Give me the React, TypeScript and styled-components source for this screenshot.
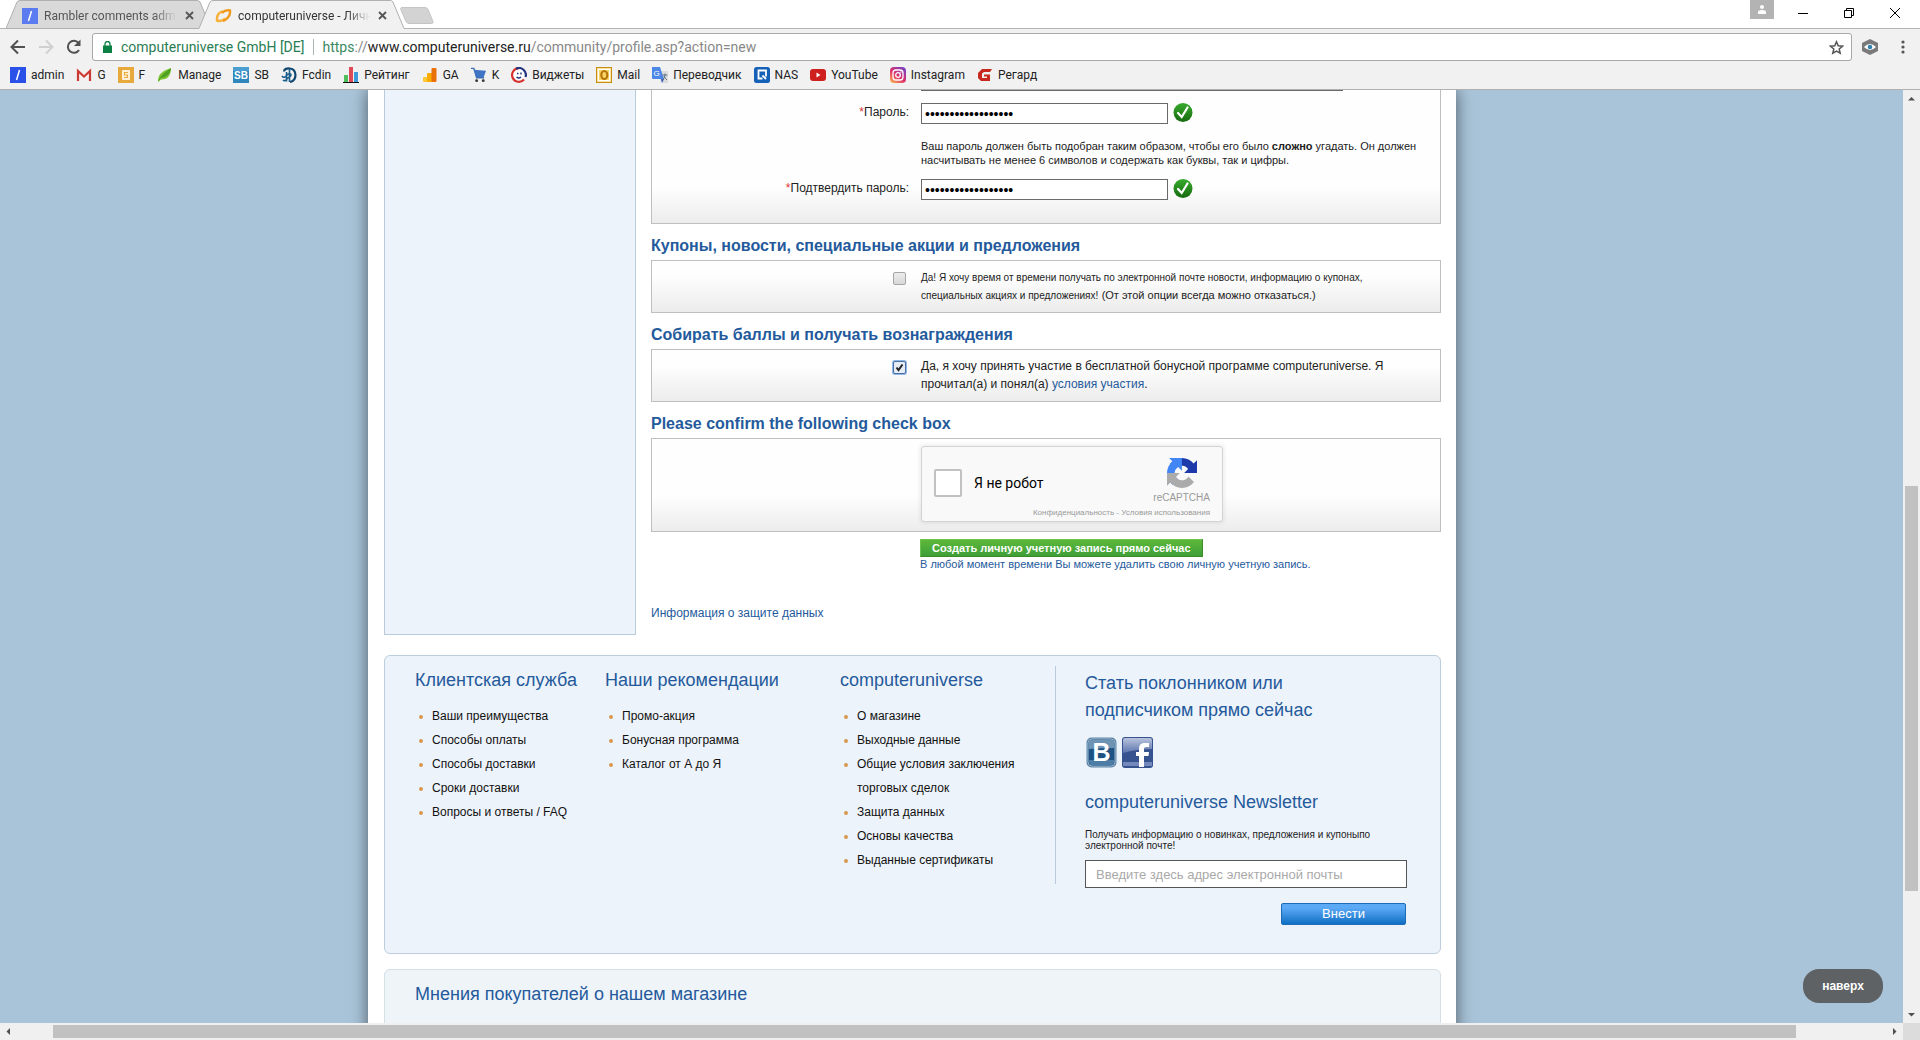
import React from 'react';
import styled, { createGlobalStyle } from 'styled-components';

const GlobalStyle = createGlobalStyle`
  *, *::before, *::after { box-sizing: border-box; }
  body { margin: 0; overflow: hidden; }
  h2, h3, p, ul { margin: 0; padding: 0; font-weight: inherit; }
  button, input { font: inherit; margin: 0; padding: 0; border: 0; border-radius: 0; background: none; }
  a { text-decoration: none; color: inherit; }
`;

const blue = '#245a9c';
const uiFont = `Roboto, "Noto Sans", sans-serif`;
const pageFont = `"Liberation Sans", Arial, sans-serif`;

const Window = styled.div`
  display: flex;
  flex-direction: column;
  height: 100vh;
  background: #fff;
  font-family: ${uiFont};
`;

/* ---------- tab strip ---------- */

const TabStrip = styled.header`
  display: flex;
  align-items: stretch;
  height: 29px;
  padding-left: 6px;
  border-bottom: 1px solid #b4b4b4;
`;

const TabItem = styled.div<{ $active?: boolean }>`
  position: relative;
  z-index: ${p => (p.$active ? 2 : 1)};
  display: flex;
  align-items: center;
  width: 206px;
  height: 29px;
  padding: 2px 18px 0 16px;
  margin-right: -13px;
`;

const TabShape = styled.svg`
  position: absolute;
  inset: 0;
  width: 100%;
  height: 100%;
`;

const TabTitle = styled.span<{ $muted?: boolean }>`
  position: relative;
  flex: 1;
  margin: 0 8px 0 6px;
  overflow: hidden;
  white-space: nowrap;
  font-size: 12px;
  line-height: 16px;
  color: ${p => (p.$muted ? '#555' : '#333')};
  mask-image: linear-gradient(90deg, #000 calc(100% - 24px), transparent);
`;

const IconButton = styled.button`
  position: relative;
  display: flex;
  align-items: center;
  justify-content: center;
  flex: none;
`;

const Icon = styled.svg`
  position: relative;
  display: block;
  flex: none;
`;

const NewTab = styled.button`
  margin: 7px 0 0 8px;
  width: 34px;
  height: 17px;
  display: flex;
`;

const WindowControls = styled.div`
  display: flex;
  align-items: center;
  margin-left: auto;
  height: 26px;
  padding-right: 2px;
`;

const ProfileButton = styled.button`
  align-self: flex-start;
  display: flex;
  align-items: center;
  justify-content: center;
  width: 24px;
  height: 19px;
  margin-right: 6px;
  background: #b3b3b3;
`;

const ControlButton = styled(IconButton)`
  width: 46px;
  height: 26px;
`;

/* ---------- toolbar ---------- */

const Toolbar = styled.div`
  display: flex;
  align-items: center;
  height: 36px;
  padding: 4px 9px 4px 9px;
  background: #f1f1f1;
`;

const NavButtons = styled.div`
  display: flex;
  gap: 10px;
  width: 83px;
`;

const AddressBar = styled.div`
  display: flex;
  align-items: center;
  flex: 1;
  height: 28px;
  padding: 0 7px 0 10px;
  border: 1px solid #a8a8a8;
  border-radius: 3px;
  background: #fff;
  font-size: 14px;
  color: #2a7d52;
`;

const CertName = styled.span`
  margin-left: 9px;
  padding-right: 9px;
  line-height: 16px;
  border-right: 1px solid #a8b8ae;
`;

const Url = styled.span`
  flex: 1;
  margin-left: 8px;
  color: #888;
  b { font-weight: 400; color: #222; }
  i { font-style: normal; color: #3a8a5f; }
`;

const Extras = styled.div`
  display: flex;
  align-items: center;
  gap: 16px;
  margin-left: 9px;
`;

const Bookmarks = styled.nav`
  display: flex;
  align-items: center;
  gap: 12px;
  height: 25px;
  padding: 0 10px 5px;
  background: #f1f1f1;
  border-bottom: 1px solid #b0b0b0;
  font-size: 12px;
  line-height: 16px;
  color: #222;
`;

const Bookmark = styled.a`
  display: flex;
  align-items: center;
  gap: 5px;
  white-space: nowrap;
`;

/* ---------- scroll bars ---------- */

const Body = styled.div`
  display: grid;
  flex: 1;
  min-height: 0;
  grid-template-columns: minmax(0, 1fr) 17px;
  grid-template-rows: minmax(0, 1fr) 17px;
`;

const Track = styled.div<{ $vertical?: boolean }>`
  display: flex;
  flex-direction: ${p => (p.$vertical ? 'column' : 'row')};
  align-items: center;
  background: #f0f0f0;
`;

const TrackButton = styled(IconButton)`
  width: 17px;
  height: 17px;
`;

const Gap = styled.div<{ $grow: number }>`
  flex: ${p => p.$grow} 1 0;
`;

const Thumb = styled.div<{ $grow: number; $vertical?: boolean }>`
  flex: ${p => p.$grow} 1 0;
  background: #c1c1c1;
  ${p => (p.$vertical ? 'width: 13px;' : 'height: 13px;')}
`;

const Corner = styled.div`
  background: #dcdcdc;
`;

/* ---------- page ---------- */

const Viewport = styled.main`
  position: relative;
  display: flex;
  justify-content: center;
  overflow: hidden;
  padding-right: 79px;
  background: #a9c4d9;
  font-family: ${pageFont};
  font-size: 12px;
  color: #222;
`;

const Page = styled.div`
  width: 1088px;
  padding: 0 15px 0 16px;
  background: #fff;
  box-shadow: 0 0 16px rgba(0, 0, 0, 0.55);
  min-height: 100%;
  align-self: flex-start;
`;

const Columns = styled.div`
  display: flex;
  gap: 15px;
`;

const Sidebar = styled.aside`
  width: 252px;
  border: 1px solid #b9cbdb;
  border-top: 0;
  background: #edf3fb;
`;

const Form = styled.form`
  flex: 1;
  padding-bottom: 15px;
`;

const Panel = styled.section<{ $open?: boolean; $pad: string }>`
  padding: ${p => p.$pad};
  border: 1px solid #bfbfbf;
  ${p => p.$open && 'border-top: 0;'}
  background: linear-gradient(0deg, #ececec, #fefefe 36px);
`;

const SectionTitle = styled.h2`
  margin: 12px 0 4px;
  font-size: 16px;
  font-weight: 700;
  line-height: 20px;
  color: ${blue};
`;

const Row = styled.div`
  display: grid;
  grid-template-columns: 257px minmax(0, 1fr);
  column-gap: 12px;
`;

const FieldLabel = styled.label`
  text-align: right;
  line-height: 18px;
  span { color: #d33; }
`;

const Field = styled.div`
  display: flex;
  gap: 5px;
`;

const TextInput = styled.input<{ $wide?: boolean }>`
  flex: none;
  width: ${p => (p.$wide ? '422px' : '247px')};
  height: 21px;
  padding: 0 3px;
  border: 1px solid #6a6a6a;
  background: #fff;
  font-size: 14px;
  color: #000;
`;

const CutField = styled.div`
  display: flex;
  align-items: flex-end;
  height: 1px;
  margin-bottom: 12px;
  overflow: hidden;
`;

const Hint = styled.p`
  grid-column: 2;
  margin: 15px 0 12px;
  padding-right: 20px;
  font-size: 11px;
  line-height: 14px;
`;

const CheckCell = styled.div`
  display: flex;
  justify-content: flex-end;
  padding: 4px 3px 0 0;
`;

const CheckBox = styled.input`
  appearance: none;
  width: 13px;
  height: 13px;
  border: 1px solid #a5a5a5;
  border-radius: 2px;
  background: linear-gradient(#ececec, #d8d8d8);
  &:checked {
    border-color: #4d6f9f;
    box-shadow: 0 0 0 1px #8fb6ea;
    background: #e6ecf5 url("data:image/svg+xml,%3Csvg xmlns='http://www.w3.org/2000/svg' viewBox='0 0 11 11'%3E%3Cpath d='M2.5 5.5l2 2.5L8.500 2.500' fill='none' stroke='%23222' stroke-width='2'/%3E%3C/svg%3E");
  }
`;

const CheckText = styled.label`
  padding-right: 40px;
  line-height: 18px;
`;

const Small = styled.span<{ $size: number }>`
  font-size: ${p => p.$size}px;
  line-height: 12px;
`;

const Link = styled.a`
  color: ${blue};
`;

const Captcha = styled.div`
  display: flex;
  align-items: center;
  width: 302px;
  height: 76px;
  padding: 0 12px 3px;
  border: 1px solid #d3d3d3;
  border-radius: 3px;
  background: #f9f9f9;
  box-shadow: 0 0 4px 1px rgba(0, 0, 0, 0.08);
  font-family: ${uiFont};
`;

const CaptchaBox = styled.input`
  appearance: none;
  flex: none;
  width: 28px;
  height: 28px;
  border: 2px solid #c1c1c1;
  border-radius: 2px;
  background: #fff;
`;

const CaptchaLabel = styled.label`
  margin-left: 12px;
  font-size: 14px;
  color: #000;
  white-space: nowrap;
`;

const CaptchaBrand = styled.div`
  display: flex;
  flex-direction: column;
  align-items: flex-end;
  flex: 1;
  padding-top: 12px;
  font-family: ${pageFont};
  color: #999;
`;

const BrandLogo = styled.div`
  display: flex;
  flex-direction: column;
  align-items: center;
  gap: 4px;
  font-size: 10px;
  line-height: 12px;
`;

const Legal = styled.div`
  margin-top: 3px;
  margin-left: -60px;
  font-size: 8px;
  line-height: 12px;
  white-space: nowrap;
`;

const Submit = styled.button`
  display: block;
  margin: 7px 0 0 269px;
  height: 18px;
  padding: 0 11px;
  border: 1px solid;
  border-color: #6cc04d #3c8a2a #3c8a2a #6cc04d;
  background: linear-gradient(#5cb83a, #3f9f38);
  color: #fff;
  font-size: 11px;
  font-weight: 700;
  line-height: 16px;
  white-space: nowrap;
`;

const DeleteNote = styled.p`
  margin: 0 0 35px 269px;
  font-size: 11px;
  line-height: 14px;
  color: ${blue};
`;

const Privacy = styled(Link)`
  display: block;
  line-height: 14px;
`;

const FooterCard = styled.footer`
  display: grid;
  grid-template-columns: 190px 235px 215px 1px minmax(0, 1fr);
  margin-top: 20px;
  padding: 10px 33px 28px 30px;
  border: 1px solid #bccddc;
  border-radius: 6px;
  background: #edf3fa;
`;

const Divider = styled.div`
  height: 218px;
  background: #b9c9dc;
`;

const FooterColumn = styled.nav`
  padding: 2px 32px 0 0;
`;

const FooterTitle = styled.h3<{ $loose?: boolean }>`
  font-size: 18px;
  line-height: ${p => (p.$loose ? 27 : 24)}px;
  color: ${blue};
  white-space: ${p => (p.$loose ? 'normal' : 'nowrap')};
`;

const LinkList = styled.ul`
  margin-top: 12px;
  list-style: none;
  line-height: 24px;
  color: #111;
`;

const LinkItem = styled.li`
  display: flex;
  gap: 9px;
  padding-left: 4px;
  &::before {
    content: '';
    flex: none;
    width: 4px;
    height: 4px;
    margin-top: 11px;
    border-radius: 50%;
    background: #d9984f;
  }
`;

const Subscribe = styled.form`
  display: flex;
  flex-direction: column;
  padding: 4px 0 0 29px;
`;

const Social = styled.div`
  display: flex;
  gap: 5px;
  margin: 13px 0 21px 1px;
`;

const SubscribeNote = styled.label`
  margin: 13px 0 9px;
  font-size: 10px;
  line-height: 11px;
`;

const EmailInput = styled.input`
  height: 28px;
  padding: 0 10px;
  border: 1px solid #555;
  background: #fff;
  font-size: 13px;
  &::placeholder { color: #a9a9a9; opacity: 1; }
`;

const SendButton = styled.button`
  align-self: flex-end;
  width: 125px;
  height: 22px;
  margin: 15px 1px 0 0;
  border: 1px solid #1c6cb8;
  border-radius: 2px;
  background: linear-gradient(#5ca9f5 20%, #0f6fc4);
  color: #fff;
  font-size: 13px;
  line-height: 20px;
`;

const ReviewsCard = styled.section`
  margin-top: 15px;
  padding: 12px 30px 60px;
  border: 1px solid #d5dfe6;
  border-radius: 6px;
  background: #eff4f9;
`;

const ToTop = styled.button`
  position: absolute;
  right: 20px;
  bottom: 20px;
  width: 80px;
  height: 34px;
  border-radius: 16px;
  background: #5e6265;
  color: #fff;
  font-size: 12px;
  font-weight: 700;
`;

/* ---------- drawings ---------- */

const Slash = ({ faded }: { faded?: boolean }) => (
  <Icon width="16" height="16" viewBox="0 0 16 16">
    <path d="M0 0h16v16H0z" fill={faded ? '#5b7bf0' : '#2b52e8'} />
    <path d="M9.500 3L6.500 13" stroke="#fff" strokeWidth="1.500" />
  </Icon>
);

const Cross = () => (
  <Icon width="9" height="9" viewBox="0 0 9 9">
    <path d="M1 1l7 7M8 1L1 8" stroke="#555" strokeWidth="1.800" />
  </Icon>
);

const UniverseMark = () => (
  <Icon width="17" height="14" viewBox="0 0 17 14">
    <path d="M8 2.200C4 3.500 1.500 7 2 11.500c3 1 6 .300 8-2" fill="none" stroke="#f7b23c" strokeWidth="2.400" />
    <path d="M7 4c2.500-2.500 6-3 8-2.500.600 4-2 9-7 10.500" fill="none" stroke="#f09a1c" strokeWidth="2.400" />
  </Icon>
);

const Check = () => (
  <Icon width="20" height="20" viewBox="0 0 20 20">
    <defs>
      <linearGradient id="ok" x1="0" y1="0" x2="0" y2="1">
        <stop offset="0" stopColor="#37ab2c" />
        <stop offset="1" stopColor="#176a10" />
      </linearGradient>
    </defs>
    <circle cx="10" cy="9.500" r="9.500" fill="url(#ok)" />
    <path d="M5 10l3.700 4L14.500 4.500" fill="none" stroke="#fff" strokeWidth="2.200" strokeLinecap="round" />
  </Icon>
);

const RecaptchaLogo = () => (
  <Icon width="30" height="30" viewBox="0 0 64 64">
    <path fill="#1c3aa9" d="M64 31.955l-.033-1.370V4.687l-7.160 7.160C50.948 4.674 42.033.093 32.050.093c-10.400 0-19.622 4.960-25.458 12.640l11.736 11.860a15.550 15.550 0 0 1 4.754-5.334c2.050-1.600 4.952-2.906 8.968-2.906.485 0 .860.057 1.135.163 4.976.393 9.288 3.140 11.828 7.124l-8.307 8.307L64 31.953" />
    <path fill="#4285f4" d="M31.862.094l-1.370.033H4.594l7.160 7.160C4.580 13.147 0 22.060 0 32.046c0 10.400 4.960 19.622 12.640 25.458L24.500 45.768a15.550 15.550 0 0 1-5.334-4.754c-1.600-2.050-2.906-4.952-2.906-8.968 0-.485.057-.860.163-1.135.393-4.976 3.140-9.288 7.124-11.828l8.307 8.307L31.860.095" />
    <path fill="#ababab" d="M.001 32.045l.033 1.370v25.898l7.160-7.160c5.860 7.173 14.774 11.754 24.760 11.754 10.400 0 19.622-4.960 25.458-12.640l-11.736-11.860a15.550 15.550 0 0 1-4.754 5.334c-2.050 1.600-4.952 2.906-8.968 2.906-.485 0-.860-.057-1.135-.163-4.976-.393-9.288-3.140-11.828-7.124l8.307-8.307c-10.522.040-22.400.066-27.295-.005" />
  </Icon>
);

const VkIcon = () => (
  <Icon width="31" height="31" viewBox="0 0 31 31">
    <rect x=".5" y=".5" width="30" height="30" rx="5" fill="#5f86a8" />
    <rect x="2" y="2" width="27" height="27" rx="4" fill="#1e5282" stroke="#9bb8cf" strokeWidth="1" />
    <path d="M2.500 12V6a4 4 0 0 1 4-3.500h18a4 4 0 0 1 4 3.500v5q-13 0-26 1z" fill="#6e94b4" />
    <path d="M3 23h25v2a4 4 0 0 1-4 3.500H7A4 4 0 0 1 3 25z" fill="#4d7da5" />
    <text x="15.500" y="24" textAnchor="middle" fontFamily="Liberation Sans" fontWeight="700" fontSize="25" fill="#fff">B</text>
  </Icon>
);

const FbIcon = () => (
  <Icon width="32" height="31" viewBox="0 0 32 31">
    <defs>
      <linearGradient id="fb" x1="0" y1="0" x2="0" y2="1">
        <stop offset="0" stopColor="#b9c3dd" />
        <stop offset="1" stopColor="#5c75ae" />
      </linearGradient>
    </defs>
    <rect width="31" height="31" rx="3" fill="#37538f" />
    <path d="M1 16V3a2 2 0 0 1 2-2h25a2 2 0 0 1 2 2v9q-15 0-29 4z" fill="url(#fb)" />
    <path d="M1 25h29v4H1z" fill="#7389bb" />
    <path d="M17 30V19h-3v-4h3v-3c0-4 2-6 5.500-6H27v4h-3c-1.500 0-2 .700-2 2v3h5l-.500 4H22v11z" fill="#fff" />
  </Icon>
);

const bookmarks: { label: string; icon: React.ReactNode }[] = [
  { label: 'admin', icon: <Slash /> },
  {
    label: 'G',
    icon: (
      <Icon width="16" height="16" viewBox="0 0 16 16">
        <path d="M1 3h14v11H1z" fill="#f4f0ef" />
        <path d="M2 14V4l6 5.500L14 4v10" fill="none" stroke="#cb3b32" strokeWidth="2.200" />
      </Icon>
    ),
  },
  {
    label: 'F',
    icon: (
      <Icon width="16" height="16" viewBox="0 0 16 16">
        <path d="M0 0h16v16H0z" fill="#e8a93c" />
        <rect x="4" y="3" width="8" height="10" rx="1" fill="#fff2d8" />
        <path d="M10 5.500H6.500V8h3v2.500H6" fill="none" stroke="#e8a93c" strokeWidth="1.200" />
      </Icon>
    ),
  },
  {
    label: 'Manage',
    icon: (
      <Icon width="16" height="16" viewBox="0 0 16 16">
        <path d="M1 15C1 7 5 4 14 1c0 8-4 12-10 11.500z" fill="#7cc433" />
        <path d="M1 15C3 9 7 6 14 1c-1 7-5 9-10 10z" fill="#4f9e24" />
      </Icon>
    ),
  },
  {
    label: 'SB',
    icon: (
      <Icon width="16" height="16" viewBox="0 0 16 16">
        <path d="M0 0h16v16H0z" fill="#2f87bd" />
        <path d="M0 0h16v4H0z" fill="#4a9fd0" />
        <text x="8" y="11.500" textAnchor="middle" fontFamily="Liberation Sans" fontWeight="700" fontSize="10" fill="#fff">SB</text>
      </Icon>
    ),
  },
  {
    label: 'Fcdin',
    icon: (
      <Icon width="16" height="16" viewBox="0 0 16 16">
        <path d="M3 4.500C3 2 6 1 9 1.500c7 1 7.500 12 0 13.500" fill="none" stroke="#12486f" strokeWidth="2.200" />
        <path d="M8.500 2v13M5.500 5v9.500M1 9c2 3 4 0 5-1s4-2 4 0-3 2-4 4-3 2-4 1" fill="none" stroke="#1d5f8d" strokeWidth="1.600" />
      </Icon>
    ),
  },
  {
    label: 'Рейтинг',
    icon: (
      <Icon width="16" height="16" viewBox="0 0 16 16">
        <path d="M1 8h4v7H1z" fill="#4fbf5c" />
        <path d="M6 0h4v15H6z" fill="#dc4b55" />
        <path d="M11 5h4v10h-4z" fill="#3c9bd8" />
        <path d="M0 15.500h16" stroke="#111" />
      </Icon>
    ),
  },
  {
    label: 'GA',
    icon: (
      <Icon width="16" height="16" viewBox="0 0 16 16">
        <rect x="1" y="10" width="6" height="5" rx="1" fill="#fcc934" />
        <rect x="5" y="6" width="6" height="9" rx="1" fill="#f9ab00" />
        <rect x="9.500" y="1" width="5" height="14" rx="1" fill="#e8710a" />
      </Icon>
    ),
  },
  {
    label: 'K',
    icon: (
      <Icon width="16" height="16" viewBox="0 0 17 16">
        <path d="M0 1h3l3 10h8" fill="none" stroke="#3f6fb5" strokeWidth="1.500" />
        <path d="M3 2.500l13 1-2.500 6.500H5.500z" fill="#3f74c4" />
        <circle cx="6" cy="14" r="1.500" fill="#333" />
        <circle cx="13" cy="14" r="1.500" fill="#333" />
      </Icon>
    ),
  },
  {
    label: 'Виджеты',
    icon: (
      <Icon width="16" height="16" viewBox="0 0 16 16">
        <circle cx="8" cy="8" r="6" fill="#fff" />
        <path d="M8 1.200A6.800 6.800 0 1 0 13 12.500" fill="none" stroke="#d6322e" strokeWidth="2.200" />
        <path d="M5 1.800A6.800 6.800 0 0 1 14.500 10" fill="none" stroke="#22357e" strokeWidth="2.200" />
        <path d="M6 6.500h1.500M10 5.500v2M5.500 10q2.500 2 4.500 0" fill="none" stroke="#22357e" strokeWidth="1.400" />
      </Icon>
    ),
  },
  {
    label: 'Mail',
    icon: (
      <Icon width="16" height="16" viewBox="0 0 16 16">
        <rect x=".5" y=".5" width="15" height="15" fill="#fbe39a" stroke="#c88d16" />
        <rect x="2.500" y="2.500" width="11" height="11" fill="#f9d469" stroke="#fff" />
        <ellipse cx="8.300" cy="8" rx="3" ry="4" fill="none" stroke="#b77708" strokeWidth="2.200" />
      </Icon>
    ),
  },
  {
    label: 'Переводчик',
    icon: (
      <Icon width="16" height="16" viewBox="0 0 16 16">
        <path d="M6 4h10v12H9z" fill="#dcdcdc" />
        <path d="M0 0h8l4 12H1a1 1 0 0 1-1-1z" fill="#4b86e8" />
        <path d="M9 12h3l-2 4z" fill="#3056b0" />
        <text x="4.500" y="9" textAnchor="middle" fontFamily="Liberation Sans" fontSize="8" fill="#fff">G</text>
        <path d="M10.500 8h5M13 6.500V8q0 3-2.500 5M12 9q1 2.500 3 4" fill="none" stroke="#607080" />
      </Icon>
    ),
  },
  {
    label: 'NAS',
    icon: (
      <Icon width="16" height="16" viewBox="0 0 16 16">
        <rect width="16" height="16" rx="2.500" fill="#1661b8" />
        <path d="M8.500 11.500H4.500v-8h7.500v6M8.500 8.500l3.500 3.500" fill="none" stroke="#fff" strokeWidth="1.800" />
      </Icon>
    ),
  },
  {
    label: 'YouTube',
    icon: (
      <Icon width="16" height="16" viewBox="0 0 16 16">
        <rect y="2" width="16" height="12" rx="3" fill="#cd201f" />
        <path d="M6.500 5.500v5l4-2.500z" fill="#fff" />
      </Icon>
    ),
  },
  {
    label: 'Instagram',
    icon: (
      <Icon width="16" height="16" viewBox="0 0 16 16">
        <defs>
          <linearGradient id="ig" x1="0" y1="1" x2=".8" y2="0">
            <stop offset="0" stopColor="#fbc04d" />
            <stop offset=".5" stopColor="#e0316b" />
            <stop offset="1" stopColor="#7a3fc0" />
          </linearGradient>
        </defs>
        <rect width="16" height="16" rx="4" fill="url(#ig)" />
        <rect x="3" y="3" width="10" height="10" rx="3" fill="none" stroke="#fff" strokeWidth="1.300" />
        <circle cx="8" cy="8" r="2.300" fill="none" stroke="#fff" strokeWidth="1.300" />
        <circle cx="11" cy="5" r=".7" fill="#fff" />
      </Icon>
    ),
  },
  {
    label: 'Регард',
    icon: (
      <Icon width="16" height="16" viewBox="0 0 16 16">
        <path d="M15 2H5L1 6v5l3 3h9V7.500H7v2h3v1.500H5V6.500L7 5h6z" fill="#c8281f" />
      </Icon>
    ),
  },
];

const footerColumns = [
  {
    title: 'Клиентская служба',
    links: ['Ваши преимущества', 'Способы оплаты', 'Способы доставки', 'Сроки доставки', 'Вопросы и ответы / FAQ'],
  },
  { title: 'Наши рекомендации', links: ['Промо-акция', 'Бонусная программа', 'Каталог от А до Я'] },
  {
    title: 'computeruniverse',
    links: [
      'О магазине',
      'Выходные данные',
      'Общие условия заключения торговых сделок',
      'Защита данных',
      'Основы качества',
      'Выданные сертификаты',
    ],
  },
];

const Tab = ({ title, icon, active }: { title: string; icon: React.ReactNode; active?: boolean }) => (
  <TabItem $active={active}>
    <TabShape viewBox="0 0 206 29" preserveAspectRatio="none">
      <path
        d={active ? 'M0 28.500L11 2Q12 .5 14 .5H191Q193 .5 194 2L205 28.500V30H0z' : 'M0 28.500L11 2Q12 .5 14 .5H191Q193 .5 194 2L205 28.500z'}
        fill={active ? '#f1f1f1' : '#d9d9d9'}
        stroke={active ? 'none' : '#b0b0b0'}
      />
      {active && <path d="M0 28.500L11 2Q12 .5 14 .5H191Q193 .5 194 2L205 28.500" fill="none" stroke="#b0b0b0" />}
    </TabShape>
    {icon}
    <TabTitle $muted={!active}>{title}</TabTitle>
    <IconButton type="button" aria-label="Закрыть вкладку"><Cross /></IconButton>
  </TabItem>
);

const Arrow = ({ d }: { d: string }) => (
  <Icon width="7" height="7" viewBox="0 0 7 7"><path d={d} fill="#505050" /></Icon>
);

export default function App() {
  return (
    <>
      <GlobalStyle />
      <Window>
        <TabStrip>
          <Tab title="Rambler comments admin" icon={<Slash faded />} />
          <Tab title="computeruniverse - Личные данные" icon={<UniverseMark />} active />
          <NewTab type="button" aria-label="Новая вкладка">
            <Icon width="34" height="17" viewBox="0 0 34 17">
              <path d="M2 .5h23q2 0 3 2l5 12q.500 2-1.500 2H9q-2 0-3-2L.800 2.500Q.3.500 2 .5z" fill="#d3d3d3" stroke="#c4c4c4" />
            </Icon>
          </NewTab>
          <WindowControls>
            <ProfileButton type="button" aria-label="Профиль">
              <Icon width="10" height="9" viewBox="0 0 10 9">
                <circle cx="5" cy="2" r="2" fill="#fff" />
                <path d="M1 9V7q0-2 4-2t4 2v2z" fill="#fff" />
              </Icon>
            </ProfileButton>
            <ControlButton type="button" aria-label="Свернуть">
              <Icon width="10" height="10" viewBox="0 0 10 10"><path d="M0 5.500h10" stroke="#000" /></Icon>
            </ControlButton>
            <ControlButton type="button" aria-label="Восстановить">
              <Icon width="10" height="10" viewBox="0 0 10 10">
                <path d="M.5 2.500h7v7h-7zM2.500 2V.5h7v7H8" fill="none" stroke="#000" />
              </Icon>
            </ControlButton>
            <ControlButton type="button" aria-label="Закрыть">
              <Icon width="10" height="10" viewBox="0 0 10 10"><path d="M0 0l10 10M10 0L0 10" stroke="#000" /></Icon>
            </ControlButton>
          </WindowControls>
        </TabStrip>

        <Toolbar>
          <NavButtons>
            <IconButton type="button" aria-label="Назад">
              <Icon width="18" height="18" viewBox="0 0 18 18">
                <path d="M16 9H3M9 2.500L2.500 9 9 15.500" fill="none" stroke="#505050" strokeWidth="2" />
              </Icon>
            </IconButton>
            <IconButton type="button" aria-label="Вперёд">
              <Icon width="18" height="18" viewBox="0 0 18 18">
                <path d="M2 9h13M9 2.500L15.500 9 9 15.500" fill="none" stroke="#d0d0d0" strokeWidth="2" />
              </Icon>
            </IconButton>
            <IconButton type="button" aria-label="Обновить">
              <Icon width="18" height="18" viewBox="0 0 18 18">
                <path d="M14 12A6 6 0 1 1 13.500 5" fill="none" stroke="#505050" strokeWidth="2" />
                <path d="M15.500 1.500V8H9z" fill="#505050" />
              </Icon>
            </IconButton>
          </NavButtons>
          <AddressBar>
            <Icon width="9" height="12" viewBox="0 0 9 12">
              <path d="M0 4.500h9V12H0z" fill="#0b8043" />
              <path d="M2 5V3a2.500 2.500 0 0 1 5 0v2" fill="none" stroke="#0b8043" strokeWidth="1.300" />
            </Icon>
            <CertName>computeruniverse GmbH [DE]</CertName>
            <Url><i>https</i>://<b>www.computeruniverse.ru</b>/community/profile.asp?action=new</Url>
            <IconButton type="button" aria-label="Добавить в закладки">
              <Icon width="15" height="15" viewBox="0 0 15 15">
                <path d="M7.500 1.800l1.700 4 4.300.400-3.300 2.800 1 4.200-3.700-2.200-3.700 2.200 1-4.200L1.500 6.200l4.300-.400z" fill="none" stroke="#555" strokeWidth="1.500" />
              </Icon>
            </IconButton>
          </AddressBar>
          <Extras>
            <IconButton type="button" aria-label="Расширение">
              <Icon width="18" height="16" viewBox="0 0 18 16">
                <path d="M9 0l8 4v8l-8 4-8-4V4z" fill="#7a7a7a" />
                <path d="M3 8q6-6 12 0-6 6-12 0z" fill="#fff" />
                <circle cx="9" cy="8" r="2.300" fill="#2f83ad" />
              </Icon>
            </IconButton>
            <IconButton type="button" aria-label="Меню">
              <Icon width="16" height="16" viewBox="0 0 16 16">
                <circle cx="8" cy="3" r="1.600" fill="#555" />
                <circle cx="8" cy="8" r="1.600" fill="#555" />
                <circle cx="8" cy="13" r="1.600" fill="#555" />
              </Icon>
            </IconButton>
          </Extras>
        </Toolbar>

        <Bookmarks>
          {bookmarks.map(b => (
            <Bookmark key={b.label} href="#">{b.icon}{b.label}</Bookmark>
          ))}
        </Bookmarks>

        <Body>
          <Viewport>
            <Page>
              <Columns>
                <Sidebar />
                <Form onSubmit={e => e.preventDefault()}>
                  <Panel $open $pad="0 0 23px">
                    <Row>
                      <span />
                      <CutField><TextInput $wide aria-label="E-mail" /></CutField>
                      <FieldLabel htmlFor="pw"><span>*</span>Пароль:</FieldLabel>
                      <Field><TextInput id="pw" type="password" defaultValue="abcdefghijklmnopqr" /><Check /></Field>
                      <Hint>
                        Ваш пароль должен быть подобран таким образом, чтобы его было <b>сложно</b> угадать. Он должен насчитывать не менее 6 символов и содержать как буквы, так и цифры.
                      </Hint>
                      <FieldLabel htmlFor="pw2"><span>*</span>Подтвердить пароль:</FieldLabel>
                      <Field><TextInput id="pw2" type="password" defaultValue="abcdefghijklmnopqr" /><Check /></Field>
                    </Row>
                  </Panel>

                  <SectionTitle>Купоны, новости, специальные акции и предложения</SectionTitle>
                  <Panel $pad="7px 0 8px">
                    <Row>
                      <CheckCell><CheckBox type="checkbox" id="news" /></CheckCell>
                      <CheckText htmlFor="news">
                        <Small $size={10}>Да! Я хочу время от времени получать по электронной почте новости, информацию о купонах, специальных акциях и предложениях!</Small>{' '}
                        <Small $size={11}>(От этой опции всегда можно отказаться.)</Small>
                      </CheckText>
                    </Row>
                  </Panel>

                  <SectionTitle>Собирать баллы и получать вознаграждения</SectionTitle>
                  <Panel $pad="7px 0 8px">
                    <Row>
                      <CheckCell><CheckBox type="checkbox" id="bonus" defaultChecked /></CheckCell>
                      <CheckText htmlFor="bonus">
                        Да, я хочу принять участие в бесплатной бонусной программе computeruniverse. Я прочитал(а) и понял(а) <Link href="#">условия участия</Link>.
                      </CheckText>
                    </Row>
                  </Panel>

                  <SectionTitle>Please confirm the following check box</SectionTitle>
                  <Panel $pad="7px 0 9px">
                    <Row>
                      <span />
                      <Captcha>
                        <CaptchaBox type="checkbox" id="robot" />
                        <CaptchaLabel htmlFor="robot">Я не робот</CaptchaLabel>
                        <CaptchaBrand>
                          <BrandLogo><RecaptchaLogo />reCAPTCHA</BrandLogo>
                          <Legal><a href="#">Конфиденциальность</a> - <a href="#">Условия использования</a></Legal>
                        </CaptchaBrand>
                      </Captcha>
                    </Row>
                  </Panel>
                  <Submit type="submit">Создать личную учетную запись прямо сейчас</Submit>
                  <DeleteNote>В любой момент времени Вы можете удалить свою личную учетную запись.</DeleteNote>
                  <Privacy href="#">Информация о защите данных</Privacy>
                </Form>
              </Columns>

              <FooterCard>
                {footerColumns.map(c => (
                  <FooterColumn key={c.title}>
                    <FooterTitle>{c.title}</FooterTitle>
                    <LinkList>
                      {c.links.map(l => <LinkItem key={l}><a href="#">{l}</a></LinkItem>)}
                    </LinkList>
                  </FooterColumn>
                ))}
                <Divider />
                <Subscribe onSubmit={e => e.preventDefault()}>
                  <FooterTitle $loose>Стать поклонником или<br />подписчиком прямо сейчас</FooterTitle>
                  <Social>
                    <a href="#" aria-label="ВКонтакте"><VkIcon /></a>
                    <a href="#" aria-label="Facebook"><FbIcon /></a>
                  </Social>
                  <FooterTitle $loose>computeruniverse Newsletter</FooterTitle>
                  <SubscribeNote htmlFor="mail">Получать информацию о новинках, предложения и купоныпо электронной почте!</SubscribeNote>
                  <EmailInput id="mail" type="email" placeholder="Введите здесь адрес электронной почты" />
                  <SendButton type="submit">Внести</SendButton>
                </Subscribe>
              </FooterCard>

              <ReviewsCard>
                <FooterTitle>Мнения покупателей о нашем магазине</FooterTitle>
              </ReviewsCard>
            </Page>
            <ToTop type="button">наверх</ToTop>
          </Viewport>

          <Track $vertical>
            <TrackButton type="button" aria-label="Вверх"><Arrow d="M0 5.500L3.500 2 7 5.500z" /></TrackButton>
            <Gap $grow={379} />
            <Thumb $vertical $grow={405} />
            <Gap $grow={115} />
            <TrackButton type="button" aria-label="Вниз"><Arrow d="M0 2h7L3.500 5.500z" /></TrackButton>
          </Track>
          <Track>
            <TrackButton type="button" aria-label="Влево"><Arrow d="M5 0v7L1.500 3.500z" /></TrackButton>
            <Gap $grow={36} />
            <Thumb $grow={1743} />
            <Gap $grow={90} />
            <TrackButton type="button" aria-label="Вправо"><Arrow d="M2 0v7l3.500-3.500z" /></TrackButton>
          </Track>
          <Corner />
        </Body>
      </Window>
    </>
  );
}
